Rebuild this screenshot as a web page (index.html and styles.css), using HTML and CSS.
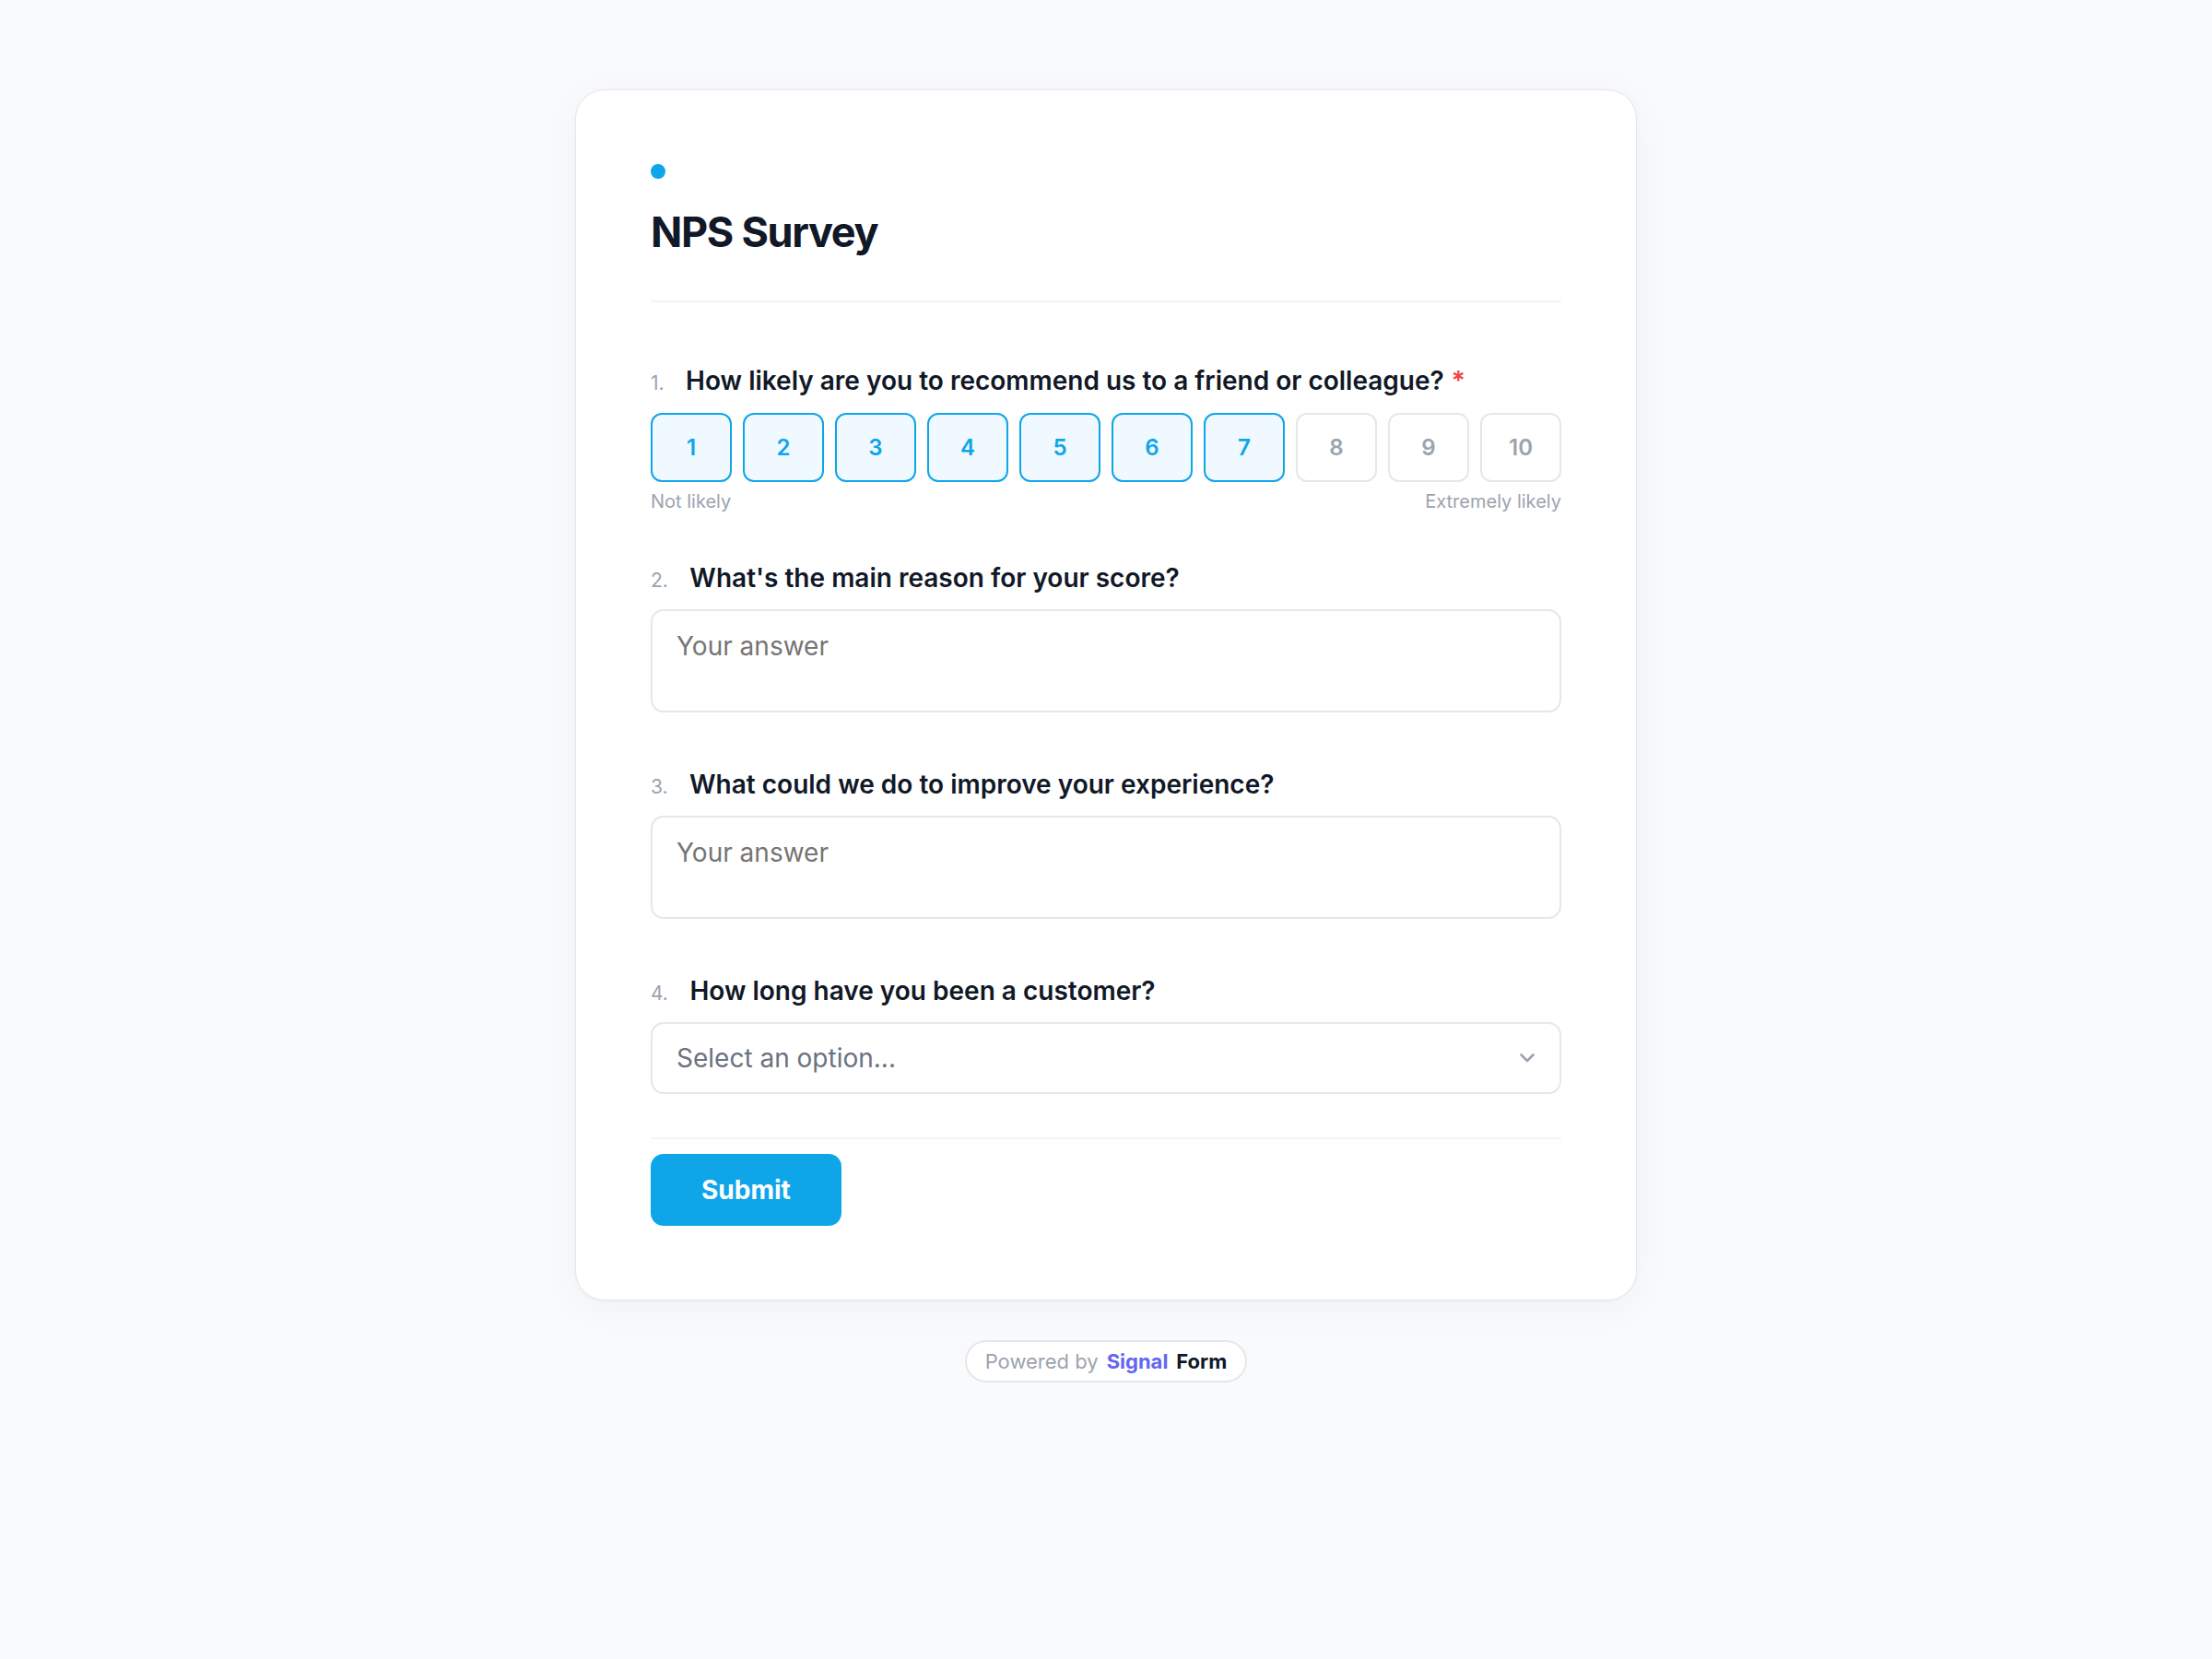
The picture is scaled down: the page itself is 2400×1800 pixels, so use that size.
FILE: index.html
```html
<!DOCTYPE html>
<html lang="en">
<head>
<meta charset="utf-8">
<title>NPS Survey</title>
<link rel="stylesheet" href="styles.css">
</head>
<body>
<main class="page">
  <section class="card">
    <header class="card-header">
      <span class="dot"></span>
      <h1 class="title">NPS Survey</h1>
    </header>
    <form class="form">
      <div class="question">
        <div class="q-label q-first"><span class="q-num">1.</span><span class="q-text">How likely are you to recommend us to a friend or colleague?</span><span class="req">*</span></div>
        <div class="scale">
          <button type="button" class="score on">1</button>
          <button type="button" class="score on">2</button>
          <button type="button" class="score on">3</button>
          <button type="button" class="score on">4</button>
          <button type="button" class="score on">5</button>
          <button type="button" class="score on">6</button>
          <button type="button" class="score on">7</button>
          <button type="button" class="score">8</button>
          <button type="button" class="score">9</button>
          <button type="button" class="score">10</button>
        </div>
        <div class="scale-labels"><span>Not likely</span><span>Extremely likely</span></div>
      </div>
      <div class="question">
        <div class="q-label"><span class="q-num">2.</span><span class="q-text">What's the main reason for your score?</span></div>
        <textarea class="answer" placeholder="Your answer"></textarea>
      </div>
      <div class="question">
        <div class="q-label"><span class="q-num">3.</span><span class="q-text">What could we do to improve your experience?</span></div>
        <textarea class="answer" placeholder="Your answer"></textarea>
      </div>
      <div class="question">
        <div class="q-label"><span class="q-num">4.</span><span class="q-text">How long have you been a customer?</span></div>
        <div class="select">
          <span class="select-text">Select an option...</span>
          <svg class="chevron" width="16" height="10" viewBox="0 0 16 10" fill="none"><path d="M1.5 1.5 L8 8 L14.5 1.5" stroke="#9ca3af" stroke-width="2.6" stroke-linecap="round" stroke-linejoin="round"/></svg>
        </div>
      </div>
      <div class="actions">
        <button type="button" class="submit">Submit</button>
      </div>
    </form>
  </section>
  <div class="powered">
    <span class="p-muted">Powered by</span><span class="p-brand">Signal</span><span class="p-form">Form</span>
  </div>
</main>
</body>
</html>
```

FILE: styles.css
```css
* { box-sizing: border-box; }

html, body {
  margin: 0;
  padding: 0;
  background: #f9fafb;
  font-family: Inter, "Noto Sans", "Liberation Sans", sans-serif;
  color: #111827;
}

.page {
  display: flex;
  flex-direction: column;
  align-items: center;
  padding-top: 97px;
  padding-bottom: 80px;
}

.card {
  width: 1152px;
  background: #ffffff;
  border: 1px solid #e5e7eb;
  border-radius: 32px;
  padding: 80px 81px;
  box-shadow: 0 8px 40px rgba(17, 24, 39, 0.04), 0 1px 3px rgba(17, 24, 39, 0.03);
}

.card-header {
  display: flex;
  flex-direction: column;
  align-items: flex-start;
  padding-bottom: 47px;
  border-bottom: 2px solid #f3f4f6;
}

.dot {
  width: 16px;
  height: 16px;
  border-radius: 50%;
  background: #0ea5e9;
}

.title {
  margin: 31px 0 0;
  font-size: 45px;
  line-height: 54px;
  font-weight: 700;
  letter-spacing: -1.3px;
  color: #111827;
}

.form {
  display: flex;
  flex-direction: column;
  gap: 51px;
  margin-top: 67px;
}

.question {
  display: flex;
  flex-direction: column;
}

.q-label {
  display: flex;
  align-items: baseline;
  font-size: 28px;
  line-height: 36px;
  font-weight: 600;
  color: #111827;
  margin-bottom: 16px;
}

.q-label.q-first {
  margin-bottom: 17px;
}

.q-num {
  font-size: 21px;
  line-height: 1;
  font-weight: 400;
  color: #9ca3af;
  margin-right: 23.5px;
}

.req {
  color: #ef4444;
  margin-left: 8px;
}

.scale {
  display: flex;
  gap: 12px;
}

.score {
  flex: 1;
  height: 75px;
  border: 2px solid #e5e7eb;
  border-radius: 12px;
  background: #ffffff;
  font-family: inherit;
  font-size: 24px;
  font-weight: 600;
  color: #9ca3af;
  padding: 0;
}

.score.on {
  border-color: #0ea5e9;
  background: #f0f9ff;
  color: #0ea5e9;
}

.scale-labels {
  display: flex;
  justify-content: space-between;
  margin-top: 7px;
  font-size: 20px;
  line-height: 28px;
  color: #9ca3af;
}

.answer {
  display: block;
  width: 100%;
  height: 112px;
  resize: none;
  border: 2px solid #e5e7eb;
  border-radius: 14px;
  padding: 17px 26px;
  font-family: inherit;
  font-size: 28px;
  line-height: 42px;
  color: #111827;
  background: #ffffff;
  margin-bottom: 9px;
  outline: none;
}

.answer::placeholder {
  color: #757575;
}

.select {
  display: flex;
  align-items: center;
  justify-content: space-between;
  height: 78px;
  border: 2px solid #e5e7eb;
  border-radius: 14px;
  padding: 0 27px 0 26px;
  background: #ffffff;
}

.select-text {
  font-size: 28px;
  line-height: 42px;
  color: #6b7280;
}

.chevron {
  display: block;
}

.actions {
  margin-top: -4px;
  padding-top: 16px;
  border-top: 2px solid #f3f4f6;
}

.submit {
  display: block;
  height: 78px;
  padding: 0 55px;
  border: none;
  border-radius: 14px;
  background: #0ea5e9;
  color: #ffffff;
  font-family: inherit;
  font-size: 28px;
  font-weight: 700;
}

.powered {
  display: inline-flex;
  align-items: center;
  gap: 9px;
  margin-top: 43px;
  height: 46px;
  padding: 0 20px;
  border: 2px solid #e5e7eb;
  border-radius: 999px;
  background: #ffffff;
  font-size: 22px;
}

.p-muted {
  color: #9ca3af;
}

.p-brand {
  color: #6366f1;
  font-weight: 700;
}

.p-form {
  color: #111827;
  font-weight: 700;
}
```
